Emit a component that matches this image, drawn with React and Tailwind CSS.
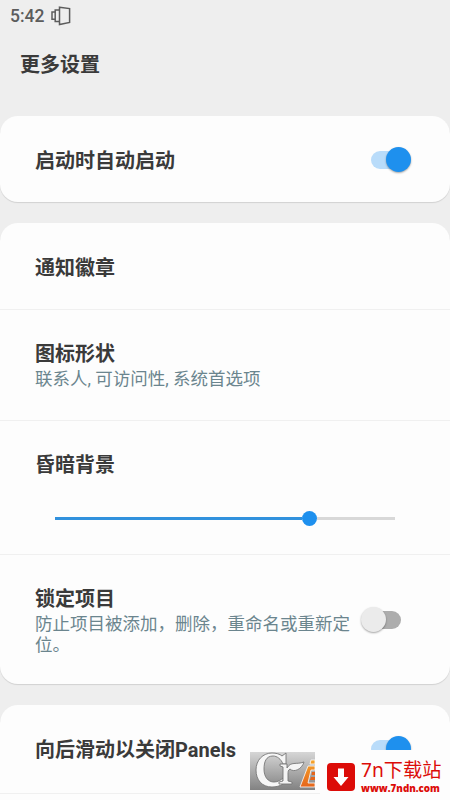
import React, { useState } from 'react';

const Toggle = ({ checked, onChange }) => (
    <button
        type="button"
        role="switch"
        aria-checked={checked}
        onClick={onChange}
        className="relative w-10 h-[25px] shrink-0"
    >
        <span
            className={`absolute top-1 h-[18px] w-[34px] rounded-full ${checked ? 'left-0 bg-[#b9dcfa]' : 'right-0 bg-[#adadad]'}`}
        />
        <span
            className={`absolute top-0 w-[25px] h-[25px] rounded-full shadow-[0_1px_2px_rgba(0,0,0,0.35)] ${checked ? 'right-0 bg-[#1e90ee]' : 'left-0 bg-[#ebebeb]'}`}
        />
    </button>
);

const Card = ({ className = '', children }) => (
    <section className={`bg-[#fdfdfd] rounded-[18px] shadow-[0_1px_1px_rgba(0,0,0,0.12)] ${className}`}>
        {children}
    </section>
);

const Title = ({ children }) => (
    <h2 className="text-[20px] leading-[26px] pt-[3px] font-bold text-[#3a3a3a]">{children}</h2>
);

const Subtitle = ({ children }) => (
    <p className="mt-[2px] text-[17.5px] leading-[21px] text-[#6b858e]">{children}</p>
);

const StatusBar = () => (
    <div className="flex items-center h-8 pl-2.5 gap-[7px] text-[#5c5c5c]">
        <span className="text-[17.5px] leading-8 font-medium">5:42</span>
        <svg width="20" height="20" viewBox="0 0 20 20" fill="none" stroke="currentColor" strokeWidth="1.5">
            <path d="M8.5 1.2 18.6 2.6V16.4L8.5 18.6Z" />
            <path d="M8.5 4H4.2V15.4H8.5" />
            <path d="M4.2 6H1V13.2H4.2" />
        </svg>
    </div>
);

// Site badges in the bottom right corner
const Watermark = () => (
    <div className="absolute right-0 bottom-0 flex h-[50px] w-[200px]">
        <svg className="w-[65px] h-[38px] mt-[2px]" viewBox="0 0 65 38">
            <defs>
                <linearGradient id="steel" x1="0" y1="0" x2="0" y2="1">
                    <stop offset="0" stopColor="#d6d6d6" />
                    <stop offset="1" stopColor="#828282" />
                </linearGradient>
                <linearGradient id="flame" x1="0" y1="0" x2="0" y2="1">
                    <stop offset="0" stopColor="#f5a52b" />
                    <stop offset="1" stopColor="#e5651b" />
                </linearGradient>
            </defs>
            <rect width="65" height="38" fill="url(#steel)" />
            <path
                d="M36 1V12H33C31 7 27 4 23 4 16 4 14 10 14 17 14 25 18 30 24 30 28 30 31 28 33 26V32C30 34 26 35 22 35 12 35 6 28 6 18 6 8 13 1 22 1 26 1 30 2 32 4Z"
                fill="#f6f6f6" stroke="#777" strokeWidth=".9"
            />
            <path
                d="M30 12H37V16C41 9 46 13 54 10 52 17 44 21 40 17 38 18 38 20 38 22V29L42 30V32H29V30L33 29V15L30 14Z"
                fill="#f4f4f4" stroke="#777" strokeWidth=".9"
            />
            <path d="M61 8H65V12H60ZM58 14H65V18H61L58 31H65V35H50Z" fill="url(#flame)" stroke="#fff" strokeWidth=".8" />
            <path d="M62 20H65V23H61.500ZM61 25H65V28H60Z" fill="#e5651b" />
        </svg>
        <div className="flex flex-1 ml-[5px] pl-[7px] pt-[13px] gap-[6px] bg-[#fdfdfd]">
            <svg className="w-7 h-7 shrink-0" viewBox="0 0 28 28">
                <rect width="28" height="28" rx="4" fill="#dc0c08" />
                <path d="M11 5.500H17V14H21.500L14 23 6.500 14H11Z" fill="#fff" />
            </svg>
            <div className="-mt-[4px] text-[#dc0c08] whitespace-nowrap">
                <div className="text-[19.2px] leading-[22px] font-['Noto_Sans','Noto_Sans_CJK_SC',sans-serif]">7n下载站</div>
                <div className="mt-px text-[9.8px] leading-[14px] font-extrabold font-['Open_Sans',sans-serif]">www.7ndn.com</div>
            </div>
        </div>
    </div>
);

const App = () => {
    const [settings, setSettings] = useState({
        autoStart: true,
        lockItems: false,
        swipeBack: true,
    });

    const toggle = (key) => setSettings({ ...settings, [key]: !settings[key] });

    return (
        <div className="relative w-[450px] h-[800px] overflow-hidden bg-[#eeeeee] font-['Roboto','Noto_Sans_CJK_SC',sans-serif]">
            <header className="h-[116px]">
                <StatusBar />
                <h1 className="pl-5 pt-5 text-[20px] leading-[26px] font-bold text-[#3a3a3a]">更多设置</h1>
            </header>

            <main className="space-y-[21px]">
                <Card className="flex items-center justify-between h-[86px] pl-[35px] pr-[39px]">
                    <Title>启动时自动启动</Title>
                    <Toggle checked={settings.autoStart} onChange={() => toggle('autoStart')} />
                </Card>

                <Card className="divide-y divide-[#f0f0f0]">
                    <div className="h-[87px] pl-[35px] pt-[29px]">
                        <Title>通知徽章</Title>
                    </div>
                    <div className="h-[111px] pl-[35px] pt-[28px]">
                        <Title>图标形状</Title>
                        <Subtitle>联系人, 可访问性, 系统首选项</Subtitle>
                    </div>
                    <div className="h-[134px] pl-[35px] pt-[28px]">
                        <Title>昏暗背景</Title>
                        <div className="flex items-center w-[340px] h-4 ml-5 mt-[32px]">
                            <div className="w-[247px] h-[3px] bg-[#3191dd]" />
                            <div className="w-[15px] h-[15px] rounded-full bg-[#1e90ee]" />
                            <div className="flex-1 h-[3px] bg-[#d8d8d8]" />
                        </div>
                    </div>
                    <div className="flex items-center justify-between h-[129px] pl-[35px] pr-[49px]">
                        <div className="w-[320px]">
                            <Title>锁定项目</Title>
                            <Subtitle>防止项目被添加，删除，重命名或重新定位。</Subtitle>
                        </div>
                        <Toggle checked={settings.lockItems} onChange={() => toggle('lockItems')} />
                    </div>
                </Card>

                <Card className="h-[120px]">
                    <div className="flex items-center justify-between h-[89px] pb-[2px] pl-[35px] pr-[39px] border-b border-[#f0f0f0]">
                        <Title>向后滑动以关闭Panels</Title>
                        <Toggle checked={settings.swipeBack} onChange={() => toggle('swipeBack')} />
                    </div>
                </Card>
            </main>

            <Watermark />
        </div>
    );
};

export default App;
